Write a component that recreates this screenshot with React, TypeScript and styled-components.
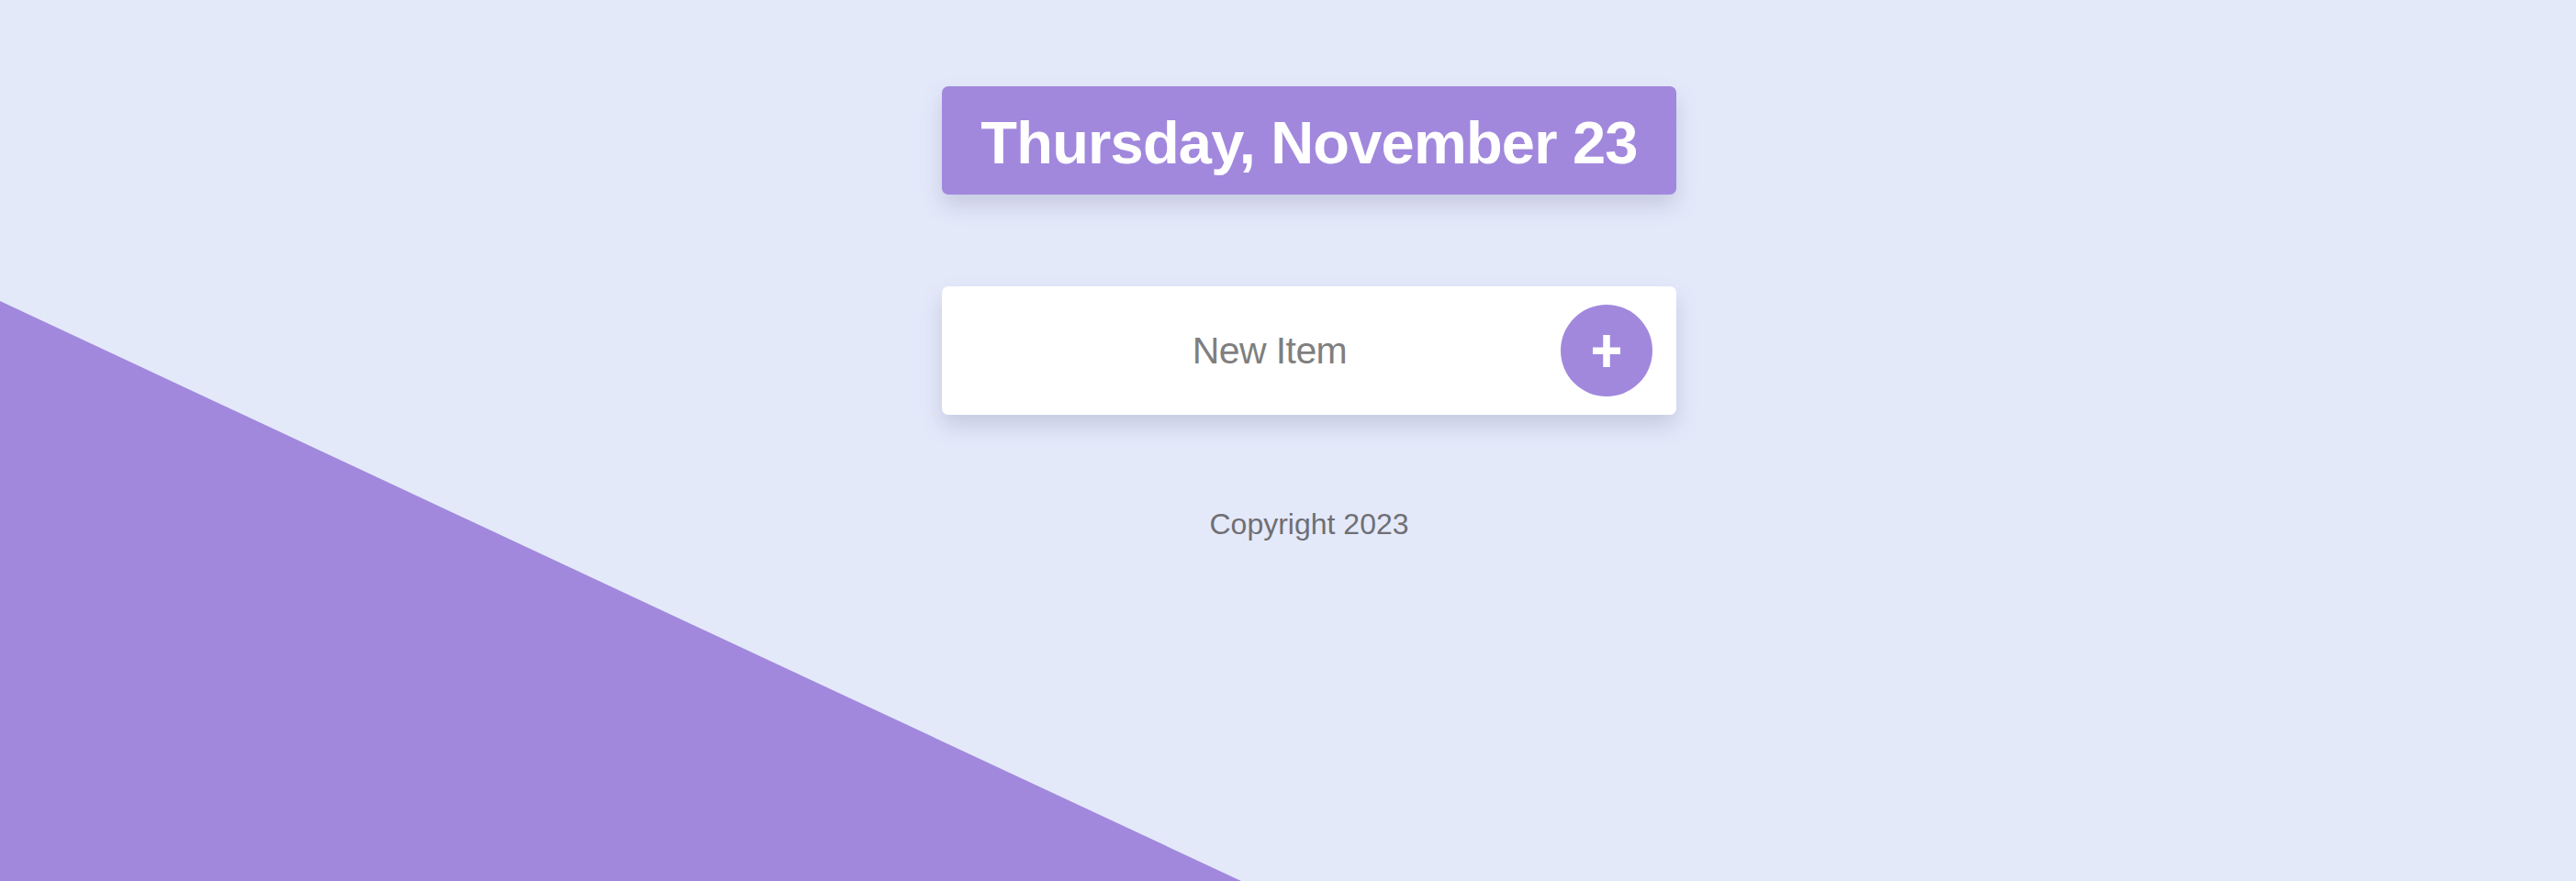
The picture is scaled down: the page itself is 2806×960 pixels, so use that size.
import React from "react";
import styled, { createGlobalStyle } from "styled-components";

const GlobalStyle = createGlobalStyle`
  html, body {
    margin: 0;
    padding: 0;
  }
  body {
    font-family: "Liberation Sans", Arial, Helvetica, sans-serif;
    background: #e4e9fa;
  }
`;

const Page = styled.div`
  position: relative;
  width: 100%;
  height: 960px;
  overflow: hidden;
  background: #e4e9fa;
`;

const Wedge = styled.div`
  position: absolute;
  inset: 0;
  background: #a188dd;
  clip-path: polygon(0 328px, 1352px 960px, 0 960px);
`;

const Main = styled.main`
  position: relative;
  z-index: 1;
  display: flex;
  flex-direction: column;
  align-items: center;
  padding: 94px 0 0 46px;
`;

const Heading = styled.div`
  box-sizing: border-box;
  width: 800px;
  height: 118px;
  display: flex;
  align-items: center;
  justify-content: center;
  background: #a188dd;
  border-radius: 7px;
  box-shadow: 0 12px 24px rgba(60, 60, 110, 0.18);
`;

const Title = styled.h1`
  margin: 0;
  color: #ffffff;
  font-family: "Liberation Sans", Arial, sans-serif;
  font-weight: 700;
  font-size: 65px;
  letter-spacing: -0.8px;
  line-height: 1;
  padding-top: 4px;
`;

const Card = styled.form`
  box-sizing: border-box;
  width: 800px;
  height: 140px;
  margin-top: 100px;
  display: flex;
  align-items: center;
  padding: 0 26px 0 40px;
  background: #ffffff;
  border-radius: 7px;
  box-shadow: 0 12px 24px rgba(60, 60, 110, 0.18);
`;

const ItemInput = styled.input`
  flex: 1;
  min-width: 0;
  border: none;
  outline: none;
  background: transparent;
  text-align: center;
  font-family: "Liberation Sans", Arial, sans-serif;
  font-size: 41px;
  letter-spacing: -0.6px;
  color: #7f7f7f;
  padding: 0;
  &::placeholder {
    color: #7f7f7f;
    opacity: 1;
  }
`;

const AddButton = styled.button`
  flex: none;
  width: 100px;
  height: 100px;
  border: none;
  border-radius: 50%;
  background: #a188dd;
  display: flex;
  align-items: center;
  justify-content: center;
  padding: 0;
  cursor: pointer;
`;

const Footer = styled.footer`
  margin-top: 103px;
  font-family: "Liberation Sans", Arial, sans-serif;
  font-size: 32px;
  line-height: 1;
  color: #6f6f74;
`;

const PlusIcon = () => (
  <svg width="30" height="35" viewBox="0 0 30 35" aria-hidden="true">
    <rect x="0" y="13.5" width="30" height="7.5" fill="#ffffff" />
    <rect x="11.25" y="0" width="7.5" height="35" fill="#ffffff" />
  </svg>
);

export default function App() {
  return (
    <>
      <GlobalStyle />
      <Page>
        <Wedge />
        <Main>
          <Heading>
            <Title>Thursday, November 23</Title>
          </Heading>
          <Card onSubmit={(e) => e.preventDefault()}>
            <ItemInput type="text" placeholder="New Item" />
            <AddButton type="submit" aria-label="Add">
              <PlusIcon />
            </AddButton>
          </Card>
          <Footer>Copyright 2023</Footer>
        </Main>
      </Page>
    </>
  );
}
